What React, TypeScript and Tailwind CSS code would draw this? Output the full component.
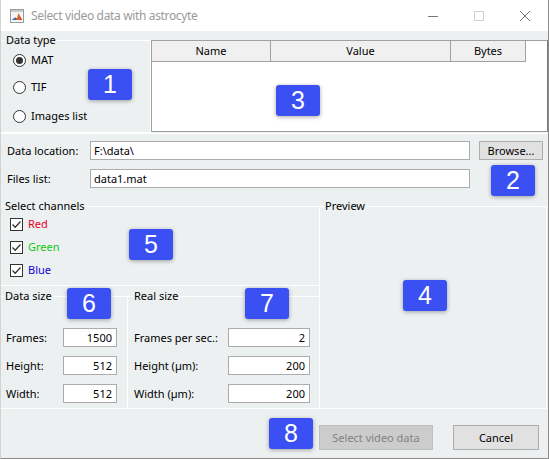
import React from 'react';

// annotation badge sitting over the dialog
function Badge({ n, className }: { n: string; className: string }) {
    return (
        <div
            className={`absolute w-[44px] h-[31px] rounded-[3px] bg-[#3a50f3] shadow-[0_1px_4px_rgba(0,0,0,0.35)] flex items-center justify-center text-white text-[25px] leading-none font-['Liberation_Sans',Arial,sans-serif] ${className}`}
        >
            {n}
        </div>
    );
}

function Radio({ label, checked }: { label: string; checked?: boolean }) {
    return (
        <div className="flex items-center h-[20px] pl-[12px]">
            <div className="w-[13px] h-[13px] rounded-full border border-[#333] bg-white flex items-center justify-center">
                {checked && <div className="w-[7px] h-[7px] rounded-full bg-[#333]" />}
            </div>
            <span className="ml-[5px]">{label}</span>
        </div>
    );
}

function Check({ label, color }: { label: string; color: string }) {
    return (
        <div className="flex items-center h-[20px] pl-[9px]">
            <div className="w-[13px] h-[13px] border border-[#333] bg-white flex items-center justify-center">
                <svg width="11" height="11" viewBox="0 0 11 11">
                    <path d="M1.5 5.5 L4.2 8.2 L9.5 2.5" fill="none" stroke="#333" strokeWidth="1.3" />
                </svg>
            </div>
            <span className={`ml-[5px] ${color}`}>{label}</span>
        </div>
    );
}

function Field({ value, className }: { value: string; className: string }) {
    return (
        <div className={`h-[19px] bg-white border border-[#acacac] flex items-center ${className}`}>
            {value}
        </div>
    );
}

function SizeRow({ label, value, labelW, inputW }: { label: string; value: string; labelW: string; inputW: string }) {
    return (
        <div className="flex items-center">
            <span className={labelW}>{label}</span>
            <Field value={value} className={`${inputW} justify-end pr-[4px]`} />
        </div>
    );
}

export default function App() {
    return (
        <div className="relative w-[549px] h-[459px] bg-[#ecf0f1] border-l border-l-[#d2d2d2] border-r border-b border-[#8c8c8c] overflow-hidden text-[11px] leading-[16px] text-black font-['Noto_Sans','Open_Sans',sans-serif]">
            {/* title bar */}
            <div className="h-[31px] bg-white flex items-center">
                <svg width="14" height="14" viewBox="0 0 14 14" className="ml-[9px]">
                    <rect x="0.5" y="0.5" width="13" height="13" fill="#f4f4f4" stroke="#9a9a9a" />
                    <rect x="1" y="1" width="12" height="2" fill="#c9c9c9" />
                    <path d="M2 11 L5 8.5 L7 9.5 L8.5 4 L12 11 Z" fill="#e2641f" />
                    <path d="M2 11 L5 8.5 L7 9.5 L6 11 Z" fill="#2a6fc0" />
                    <path d="M8.5 4 L9.5 7 L12 11 L10.5 11 Z" fill="#b8321a" />
                </svg>
                <span className="ml-[7px] text-[12px] tracking-[-0.35px] text-[#9a9a9a]">Select video data with astrocyte</span>
                <div className="ml-auto flex items-center">
                    <svg width="12" height="12" viewBox="0 0 12 12" className="mr-[34px]">
                        <path d="M1 6.5 H11" stroke="#777" strokeWidth="1" />
                    </svg>
                    <svg width="12" height="12" viewBox="0 0 12 12" className="mr-[34px]">
                        <rect x="1.5" y="1.5" width="9" height="9" fill="none" stroke="#cfcfcf" />
                    </svg>
                    <svg width="12" height="12" viewBox="0 0 12 12" className="mr-[17px]">
                        <path d="M1 1 L11 11 M11 1 L1 11" stroke="#777" strokeWidth="1" />
                    </svg>
                </div>
            </div>

            {/* data type + workspace table */}
            <div className="flex h-[102px]">
                <fieldset className="w-[150px] h-[101px] mt-px border-t border-r border-b border-white">
                    <legend className="ml-[4px] px-[1px]">Data type</legend>
                    <div className="pt-[2px]">
                        <Radio label="MAT" checked />
                        <div className="h-[7px]" />
                        <Radio label="TIF" />
                        <div className="h-[9px]" />
                        <Radio label="Images list" />
                    </div>
                </fieldset>
                <div className="w-[397px] h-[92px] mt-[9px] bg-white border border-[#a0a0a0] border-r-[#7a7a7a]">
                    <div className="flex h-[21px]">
                        <div className="w-[119px] bg-[#f0f0f0] border-r border-b border-[#a0a0a0] flex items-center justify-center">Name</div>
                        <div className="w-[180px] bg-[#f0f0f0] border-r border-b border-[#a0a0a0] flex items-center justify-center">Value</div>
                        <div className="w-[75px] bg-[#f0f0f0] border-r border-b border-[#a0a0a0] flex items-center justify-center">Bytes</div>
                    </div>
                </div>
            </div>

            {/* location rows */}
            <div className="h-[64px] border-t border-white pt-[7px] flex flex-col gap-[9px]">
                <div className="flex items-center">
                    <span className="w-[89px] pl-[6px]">Data location:</span>
                    <Field value="F:\data\" className="w-[380px] pl-[3px]" />
                    <button className="ml-[9px] w-[64px] h-[19px] bg-[#e1e1e1] border border-[#adadad] flex items-center justify-center">
                        Browse...
                    </button>
                </div>
                <div className="flex items-center">
                    <span className="w-[89px] pl-[6px]">Files list:</span>
                    <Field value="data1.mat" className="w-[380px] pl-[3px]" />
                </div>
            </div>

            {/* channels, sizes, preview */}
            <div className="flex mt-[1px]">
                <div className="w-[318px] flex flex-col">
                    <fieldset className="h-[88px] border-t border-b border-white">
                        <legend className="ml-[3px] px-[1px]">Select channels</legend>
                        <Check label="Red" color="text-[#e8001c]" />
                        <div className="h-[3px]" />
                        <Check label="Green" color="text-[#12c812]" />
                        <div className="h-[3px]" />
                        <Check label="Blue" color="text-[#1000d8]" />
                    </fieldset>
                    <div className="flex mt-[2px]">
                        <fieldset className="w-[127px] h-[121px] border-t border-r border-b border-white">
                            <legend className="ml-[3px] px-[1px]">Data size</legend>
                            <div className="pt-[24px] pl-[5px] flex flex-col gap-[9px]">
                                <SizeRow label="Frames:" value="1500" labelW="w-[57px]" inputW="w-[54px]" />
                                <SizeRow label="Height:" value="512" labelW="w-[57px]" inputW="w-[54px]" />
                                <SizeRow label="Width:" value="512" labelW="w-[57px]" inputW="w-[54px]" />
                            </div>
                        </fieldset>
                        <fieldset className="w-[191px] h-[121px] border-t border-b border-white">
                            <legend className="ml-[5px] px-[1px]">Real size</legend>
                            <div className="pt-[24px] pl-[6px] flex flex-col gap-[9px]">
                                <SizeRow label="Frames per sec.:" value="2" labelW="w-[94px]" inputW="w-[82px]" />
                                <SizeRow label="Height (µm):" value="200" labelW="w-[94px]" inputW="w-[82px]" />
                                <SizeRow label="Width (µm):" value="200" labelW="w-[94px]" inputW="w-[82px]" />
                            </div>
                        </fieldset>
                    </div>
                </div>
                <fieldset className="w-[228px] h-[211px] border border-white">
                    <legend className="ml-[4px] px-[1px]">Preview</legend>
                </fieldset>
            </div>

            {/* buttons */}
            <div className="flex justify-end items-center pt-[16px] pr-[9px] gap-[20px]">
                <button className="w-[114px] h-[25px] bg-[#cccccc] border border-[#bfbfbf] text-[#838383]">Select video data</button>
                <button className="w-[86px] h-[25px] bg-[#e1e1e1] border border-[#adadad]">Cancel</button>
            </div>

            <Badge n="1" className="left-[87px] top-[69px]" />
            <Badge n="3" className="left-[275px] top-[85px]" />
            <Badge n="2" className="left-[490px] top-[165px]" />
            <Badge n="5" className="left-[128px] top-[229px]" />
            <Badge n="4" className="left-[402px] top-[280px]" />
            <Badge n="6" className="left-[66px] top-[288px]" />
            <Badge n="7" className="left-[244px] top-[288px]" />
            <Badge n="8" className="left-[268px] top-[418px]" />
        </div>
    );
}
